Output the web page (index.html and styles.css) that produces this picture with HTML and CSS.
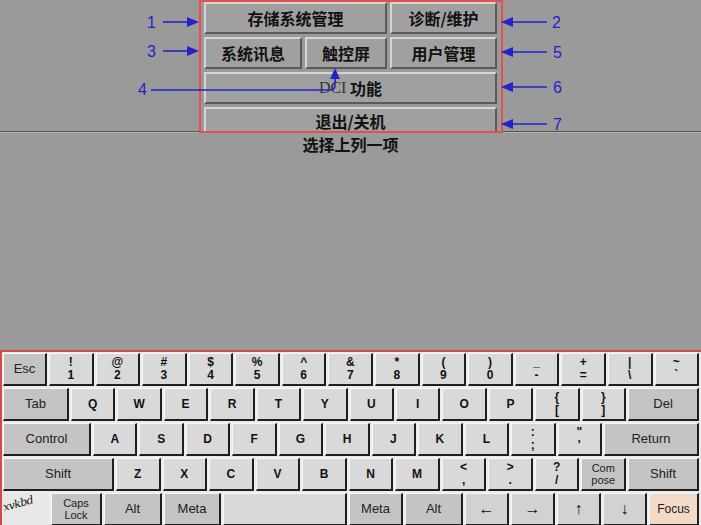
FILE: index.html
```html
<!DOCTYPE html>
<html lang="zh">
<head>
<meta charset="utf-8">
<title>xvkbd menu</title>
<link rel="stylesheet" href="styles.css">
</head>
<body>
<div class="page">
  <div class="screen">
    <div class="top">
      <div class="menu">
        <div class="btn span2">存储系统管理</div>
        <div class="btn">诊断/维护</div>
        <div class="btn">系统讯息</div>
        <div class="btn">触控屏</div>
        <div class="btn">用户管理</div>
        <div class="btn span3"><span class="dci">DCI</span>&nbsp;功能</div>
        <div class="btn span3 last">退出/关机</div>
      </div>
    </div>
    <div class="sep"></div>
    <div class="prompt">选择上列一项</div>
  </div>

  <div class="kbd">
    <div class="row">
      <div class="key mod esc">Esc</div>
      <div class="key"><span>!</span><span>1</span></div>
      <div class="key"><span>@</span><span>2</span></div>
      <div class="key"><span>#</span><span>3</span></div>
      <div class="key"><span>$</span><span>4</span></div>
      <div class="key"><span>%</span><span>5</span></div>
      <div class="key"><span>^</span><span>6</span></div>
      <div class="key"><span>&amp;</span><span>7</span></div>
      <div class="key"><span>*</span><span>8</span></div>
      <div class="key"><span>(</span><span>9</span></div>
      <div class="key"><span>)</span><span>0</span></div>
      <div class="key"><span>_</span><span>-</span></div>
      <div class="key"><span>+</span><span>=</span></div>
      <div class="key"><span>|</span><span>\</span></div>
      <div class="key"><span>~</span><span>`</span></div>
    </div>
    <div class="row">
      <div class="key mod tab">Tab</div>
      <div class="key">Q</div>
      <div class="key">W</div>
      <div class="key">E</div>
      <div class="key">R</div>
      <div class="key">T</div>
      <div class="key">Y</div>
      <div class="key">U</div>
      <div class="key">I</div>
      <div class="key">O</div>
      <div class="key">P</div>
      <div class="key"><span>{</span><span>[</span></div>
      <div class="key"><span>}</span><span>]</span></div>
      <div class="key mod del">Del</div>
    </div>
    <div class="row">
      <div class="key mod ctrl">Control</div>
      <div class="key">A</div>
      <div class="key">S</div>
      <div class="key">D</div>
      <div class="key">F</div>
      <div class="key">G</div>
      <div class="key">H</div>
      <div class="key">J</div>
      <div class="key">K</div>
      <div class="key">L</div>
      <div class="key"><span>:</span><span>;</span></div>
      <div class="key"><span>"</span><span>'</span></div>
      <div class="key mod ret">Return</div>
    </div>
    <div class="row">
      <div class="key mod lshift">Shift</div>
      <div class="key">Z</div>
      <div class="key">X</div>
      <div class="key">C</div>
      <div class="key">V</div>
      <div class="key">B</div>
      <div class="key">N</div>
      <div class="key">M</div>
      <div class="key"><span>&lt;</span><span>,</span></div>
      <div class="key"><span>&gt;</span><span>.</span></div>
      <div class="key"><span>?</span><span>/</span></div>
      <div class="key mod two"><span>Com</span><span>pose</span></div>
      <div class="key mod rshift">Shift</div>
    </div>
    <div class="row">
      <div class="logo"><span>xvkbd</span></div>
      <div class="key mod two caps"><span>Caps</span><span>Lock</span></div>
      <div class="key mod alt1">Alt</div>
      <div class="key mod meta1">Meta</div>
      <div class="key space"></div>
      <div class="key mod meta2">Meta</div>
      <div class="key mod alt2">Alt</div>
      <div class="key arrow">←</div>
      <div class="key arrow">→</div>
      <div class="key arrow">↑</div>
      <div class="key arrow">↓</div>
      <div class="key mod focus">Focus</div>
    </div>
  </div>

  <div class="frame"></div>
  <svg class="notes" width="701" height="350" viewBox="0 0 701 350">
    <g class="lines">
      <line x1="163" y1="22" x2="190" y2="22"/>
      <line x1="511" y1="22" x2="547" y2="22"/>
      <line x1="163" y1="51" x2="190" y2="51"/>
      <line x1="511" y1="52" x2="547" y2="52"/>
      <path d="M151 90 H330 Q335 90 335 85 V78" />
      <line x1="511" y1="87" x2="547" y2="87"/>
      <line x1="511" y1="124" x2="547" y2="124"/>
    </g>
    <g class="heads">
      <polygon points="199,22 187,17 187,27"/>
      <polygon points="501,22 513,17 513,27"/>
      <polygon points="199,51 187,46 187,56"/>
      <polygon points="501,52 513,47 513,57"/>
      <polygon points="335,68 330,79 340,79"/>
      <polygon points="501,87 513,82 513,92"/>
      <polygon points="501,124 513,119 513,129"/>
    </g>
    <g class="nums">
      <text x="147" y="28">1</text>
      <text x="552" y="28">2</text>
      <text x="147" y="57">3</text>
      <text x="138" y="95">4</text>
      <text x="553" y="58">5</text>
      <text x="553" y="93">6</text>
      <text x="553" y="130">7</text>
    </g>
  </svg>
</div>
</body>
</html>
```

FILE: styles.css
```css
* { box-sizing: border-box; }
html, body { margin: 0; padding: 0; }
body {
  width: 701px;
  height: 525px;
  overflow: hidden;
  background: #9a9a9a;
  font-family: "Liberation Sans", Arial, sans-serif;
}
.page {
  position: relative;
  width: 701px;
  height: 525px;
  overflow: hidden;
}
.screen {
  height: 350px;
  background: #9a9a9a;
}
.top {
  height: 131px;
  display: flex;
  justify-content: center;
}
.menu {
  margin-top: 2px;
  width: 293px;
  display: grid;
  grid-template-columns: 98px 82px 107px;
  grid-template-rows: 32px 32px 32px 24px;
  gap: 3px;
}
.btn {
  background: #a0a0a0;
  border-top: 2px solid #d6d6d6;
  border-left: 2px solid #d6d6d6;
  border-right: 2px solid #5a5a5a;
  border-bottom: 2px solid #5a5a5a;
  display: flex;
  align-items: center;
  justify-content: center;
  font-family: "Noto Sans CJK SC", sans-serif;
  font-weight: 700;
  font-size: 16px;
  color: #111;
  white-space: nowrap;
}
.btn.last {
  border-bottom: none;
  line-height: 18px;
  padding-top: 1px;
}
.span2 { grid-column: span 2; }
.span3 { grid-column: span 3; }
.dci {
  font-family: "Liberation Serif", serif;
  font-weight: 400;
  color: #333;
}
.sep {
  height: 2px;
  border-top: 1px solid #555;
  border-bottom: 1px solid #b4b4b4;
}
.prompt {
  text-align: center;
  font-family: "Noto Sans CJK SC", sans-serif;
  font-weight: 700;
  font-size: 16px;
  line-height: 22px;
  color: #111;
}

/* keyboard */
.kbd {
  height: 175px;
  background: #ececec;
  border-top: 2px solid #d24a4a;
  border-left: 2px solid #d24a4a;
  padding: 1px 2px 0 1px;
  display: flex;
  flex-direction: column;
  gap: 2px;
}
.row {
  display: flex;
  gap: 2px;
  height: 33px;
  flex: none;
}
.key {
  flex: 1 1 0;
  min-width: 0;
  background: #d9d9d9;
  border-top: 1px solid #f7f7f7;
  border-left: 1px solid #f7f7f7;
  border-right: 2px solid #1f1f1f;
  border-bottom: 2px solid #1f1f1f;
  display: flex;
  flex-direction: column;
  align-items: center;
  justify-content: center;
  font-weight: 700;
  font-size: 12px;
  line-height: 13px;
  color: #111;
}
.key span { display: block; }
.mod {
  background: #c4c4c4;
  font-weight: 400;
  font-size: 13px;
  line-height: 14px;
  color: #222;
}
.mod.two { font-size: 11px; line-height: 12px; }
.esc { flex: 0 0 44px; }
.tab { flex: 0 0 66px; }
.del { flex: 0 0 71px; }
.ctrl { flex: 0 0 88px; }
.ret { flex: 0 0 95px; }
.lshift { flex: 0 0 111px; }
.rshift { flex: 0 0 71px; }
.logo {
  flex: 0 0 46px;
  background: #e8e8e8;
  overflow: hidden;
}
.logo span {
  display: block;
  margin: 9px 0 0 2px;
  font-family: "DejaVu Serif", serif;
  font-style: italic;
  font-size: 11px;
  line-height: 12px;
  color: #111;
  transform: rotate(-15deg);
  transform-origin: left bottom;
  letter-spacing: -0.5px;
}
.caps { flex: 0 0 51px; }
.alt1 { flex: 0 0 58px; }
.meta1 { flex: 0 0 57px; }
.space { flex: 0 0 124px; }
.meta2 { flex: 0 0 54px; }
.alt2 { flex: 0 0 58px; }
.arrow {
  font-weight: 400;
  font-size: 16px;
  line-height: 16px;
  background: #d2d2d2;
}
.focus {
  flex: 0 0 50px;
  background: #f3dac6;
  font-size: 12px;
}

/* annotation overlay */
.frame {
  position: absolute;
  left: 199px;
  top: 0;
  width: 304px;
  height: 133px;
  border: 2px solid #e2514f;
}
.notes {
  position: absolute;
  left: 0;
  top: 0;
}
.notes .lines line,
.notes .lines path {
  stroke: #2323c8;
  stroke-width: 1.6;
  fill: none;
}
.notes .heads polygon { fill: #2323c8; }
.notes .nums text {
  font-family: "Liberation Sans", Arial, sans-serif;
  font-size: 16px;
  fill: #2323c8;
}
```
